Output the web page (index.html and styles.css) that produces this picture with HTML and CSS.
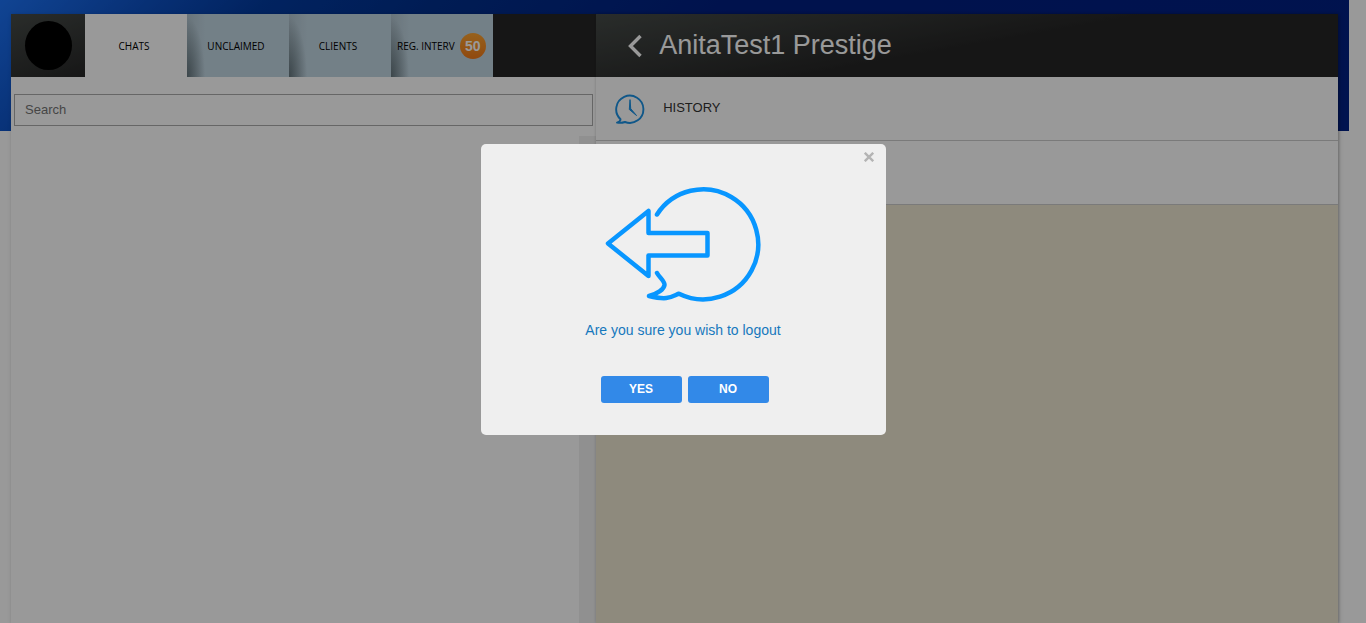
FILE: index.html
```html
<!DOCTYPE html>
<html lang="en">
<head>
<meta charset="utf-8">
<title>Chats</title>
<link rel="stylesheet" href="styles.css">
</head>
<body>
<div class="page">
  <div class="app">
    <section class="sidebar">
      <header class="tabs">
        <div class="avatar-cell"><span class="avatar"></span></div>
        <nav class="tab-list">
          <button class="tab tab-active" type="button">CHATS</button>
          <button class="tab" type="button">UNCLAIMED</button>
          <button class="tab" type="button">CLIENTS</button>
          <button class="tab tab-counted" type="button">REG. INTERV <span class="count">50</span></button>
        </nav>
      </header>
      <div class="search"><input class="search-input" type="text" placeholder="Search" aria-label="Search"></div>
      <div class="chat-list"><div class="scroll-track"></div></div>
    </section>
    <main class="detail">
      <header class="detail-header">
        <button class="back" type="button" aria-label="Back">
          <svg width="14" height="24" viewBox="0 0 14 24" fill="none" stroke="#fff" stroke-width="3.400"><path d="M12.500 2L2.500 12L12.500 22"/></svg>
        </button>
        <h1 class="name">AnitaTest1 Prestige</h1>
      </header>
      <div class="row">
        <svg class="history-icon" width="30" height="30" viewBox="0 0 30 30" fill="none" stroke="#1b92e4" stroke-width="1.900" stroke-linecap="round" stroke-linejoin="round">
          <path d="M5.500 25.200A13.600 13.600 0 1 1 10 28Q6 29.300 2 28.600Q5.500 27.500 5.500 25.200"/>
          <path d="M15 6L14.300 15.500L21.500 21.500L16 15Z" fill="#1b92e4" stroke-width="1"/>
        </svg>
        <span class="row-label">HISTORY</span>
      </div>
      <div class="row"></div>
      <div class="canvas"></div>
    </main>
  </div>
</div>
<div class="overlay">
  <div class="dialog" role="dialog" aria-modal="true" aria-labelledby="question">
    <button class="close" type="button" aria-label="Close">
      <svg width="10" height="10" viewBox="0 0 10 10" stroke="#b4b4b4" stroke-width="2.400"><path d="M.8.800L9.200 9.200M9.200.8L.8 9.200"/></svg>
    </button>
    <svg class="logout-icon" width="156" height="116" viewBox="1 0 156 116" fill="none" stroke="#0896ff" stroke-width="4.500" stroke-linecap="round" stroke-linejoin="round">
      <path d="M53 28.500A55 55 0 1 1 75 107.700C67 111 64 114.500 45 110C53 108 60 103.500 60.500 99C61 95.500 55.500 91.500 53 87"/>
      <path d="M44.500 25V47H103.500V69.500H44.500V90L4 57.500Z"/>
    </svg>
    <p class="question" id="question">Are you sure you wish to logout</p>
    <div class="actions">
      <button class="action" type="button">YES</button>
      <button class="action" type="button">NO</button>
    </div>
  </div>
</div>
</body>
</html>
```
FILE: styles.css
```css
* { box-sizing: border-box; }

body {
  margin: 0;
  height: 100vh;
  overflow: hidden;
  font-family: "Liberation Sans", Arial, sans-serif;
  background: #fff;
}

button {
  border: 0;
  padding: 0;
  background: none;
  font-family: inherit;
}

.page {
  height: 100%;
  margin-right: 17px;
  padding: 14px 11px 0;
  background: linear-gradient(135deg, #1c72f5 0, #0d51c4 10%, #033ba0 18%, #002f8c 30%, #001e80 50%, #002084 100%) no-repeat 0 0 / 100% 131px;
}

.app {
  display: flex;
  height: 100%;
  background: #fff;
  box-shadow: 1px 1px 4px rgba(0, 0, 0, .25);
}

.sidebar {
  display: flex;
  flex-direction: column;
  flex: 0 0 44.1%;
}

.tabs {
  display: flex;
  height: 63px;
  background: #262626;
}

.avatar-cell {
  display: flex;
  align-items: center;
  justify-content: center;
  flex: 0 0 74px;
  background: linear-gradient(160deg, #464b48, #262626);
}

.avatar {
  width: 47px;
  height: 49px;
  border-radius: 50%;
  background: #000;
}

.tab-list { display: flex; }

.tab {
  width: 102px;
  padding: 0 4px 0 0;
  font-family: "Open Sans", "Noto Sans", sans-serif;
  font-size: 10px;
  color: #000;
  background: radial-gradient(ellipse 18px 60px at 0 100%, rgba(50, 65, 70, .6), transparent), linear-gradient(90deg, #b0c3ce, #c0d5e1 18px);
}

.tab-active { background: #fff; }

.tab-counted {
  display: flex;
  align-items: center;
  gap: 5px;
  padding: 0 0 0 6px;
  white-space: nowrap;
}

.count {
  flex: 0 0 26px;
  height: 26px;
  border-radius: 50%;
  background: linear-gradient(#fba230, #f07a19);
  color: #fff;
  font: bold 14px/26px "Liberation Sans", Arial, sans-serif;
}

.search { padding: 17px 3px 10px; }

.search-input {
  display: block;
  width: 100%;
  height: 32px;
  padding: 0 10px 2px;
  border: 1px solid #aaa;
  border-radius: 0;
  background: #fff;
  font: 13px "Liberation Sans", Arial, sans-serif;
}

.search-input::placeholder { color: #757575; }

.chat-list {
  display: flex;
  justify-content: flex-end;
  flex: 1;
}

.scroll-track {
  width: 17px;
  background: #f0f0f0;
}

.detail {
  display: flex;
  flex-direction: column;
  flex: 1;
  box-shadow: 0 0 3px rgba(0, 0, 0, .2);
}

.detail-header {
  display: flex;
  align-items: center;
  gap: 17px;
  height: 63px;
  padding-left: 32px;
  background: linear-gradient(170deg, #464b48, #262626 50%);
}

.back svg { display: block; }

.name {
  margin: 0;
  font-size: 27px;
  font-weight: normal;
  color: #fff;
}

.row {
  display: flex;
  gap: 18px;
  height: 64px;
  padding: 17px 19px;
  border-bottom: 1px solid #ccc;
}

.row-label {
  font-size: 13px;
  line-height: 27px;
  color: #333;
}

.canvas {
  flex: 1;
  background: #ede6d1;
}

.overlay {
  position: fixed;
  inset: 0;
  display: flex;
  justify-content: center;
  align-items: flex-start;
  padding-top: 144px;
  background: rgba(0, 0, 0, .4);
}

.dialog {
  position: relative;
  display: flex;
  flex-direction: column;
  align-items: center;
  width: 405px;
  padding: 42px 20px 32px;
  border-radius: 5px;
  background: #efefef;
}

.close {
  position: absolute;
  top: 8px;
  right: 12px;
}

.close svg { display: block; }

.question {
  margin: 20px 0 38px;
  font-size: 14px;
  line-height: 16px;
  color: #1678bd;
}

.actions {
  display: flex;
  gap: 6px;
  padding-left: 3px;
}

.action {
  width: 81px;
  height: 27px;
  padding-bottom: 2px;
  border-radius: 3px;
  background: #3289e8;
  color: #fff;
  font-size: 12px;
  font-weight: bold;
}
```
